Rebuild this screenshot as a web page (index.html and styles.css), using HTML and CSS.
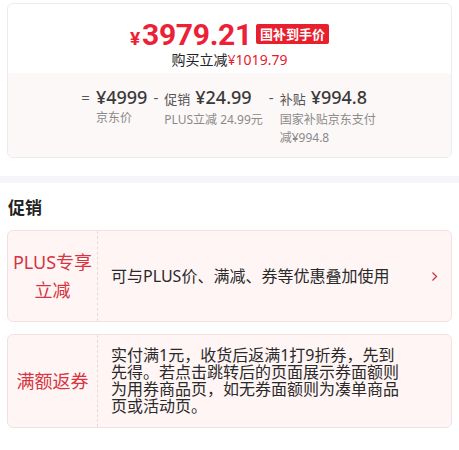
FILE: index.html
```html
<!DOCTYPE html>
<html lang="zh-CN">
<head>
    <meta charset="UTF-8">
    <meta name="viewport" content="width=device-width, initial-scale=1.0">
    <title>价格与促销</title>
    <link rel="stylesheet" href="styles.css">
</head>
<body>
    <div class="price-card">
        <div class="price-main">
            <div class="price-line">
                <span class="final"><span class="yen">¥</span>3979.21</span>
                <span class="badge">国补到手价</span>
            </div>
            <div class="saving">购买立减<span class="red">¥1019.79</span></div>
        </div>
        <div class="price-detail">
            <div class="calc-item">
                <span class="sign">=</span>
                <div class="calc-body">
                    <div class="calc-top"><span class="amount">¥4999</span></div>
                    <div class="calc-sub">京东价</div>
                </div>
            </div>
            <div class="calc-item">
                <span class="sign">-</span>
                <div class="calc-body">
                    <div class="calc-top"><span class="calc-name">促销</span><span class="amount">¥24.99</span></div>
                    <div class="calc-sub">PLUS立减 24.99元</div>
                </div>
            </div>
            <div class="calc-item">
                <span class="sign">-</span>
                <div class="calc-body narrow">
                    <div class="calc-top"><span class="calc-name">补贴</span><span class="amount">¥994.8</span></div>
                    <div class="calc-sub">国家补贴京东支付减¥994.8</div>
                </div>
            </div>
        </div>
    </div>

    <div class="divider-band"></div>

    <h2 class="section-title">促销</h2>

    <div class="promo">
        <div class="promo-label">PLUS专享<br>立减</div>
        <div class="promo-text">可与PLUS价、满减、券等优惠叠加使用</div>
        <div class="promo-arrow">
            <svg width="7" height="11" viewBox="0 0 7 11"><path d="M1.5 1.5 L5.5 5.5 L1.5 9.5" fill="none" stroke="#c8334a" stroke-width="1.3"/></svg>
        </div>
    </div>

    <div class="promo">
        <div class="promo-label">满额返券</div>
        <div class="promo-text">实付满1元，收货后返满1打9折券，先到先得。若点击跳转后的页面展示券面额则为用券商品页，如无券面额则为凑单商品页或活动页。</div>
        <div class="promo-arrow"></div>
    </div>
</body>
</html>
```

FILE: styles.css
```css
body {
    margin: 0;
    padding-top: 3px;
    font-family: "Noto Sans", "Noto Sans CJK SC", sans-serif;
    color: #333;
    background-color: #fff;
}
.price-card {
    margin: 0 7px;
    border: 1px solid #ececec;
    border-radius: 6px;
    overflow: hidden;
}
.price-main {
    height: 69px;
    padding-top: 13px;
    box-sizing: border-box;
    text-align: center;
}
.price-line {
    display: flex;
    justify-content: center;
    align-items: center;
    height: 34px;
}
.final {
    color: #ec2135;
    font-family: Roboto, sans-serif;
    font-weight: 700;
    font-size: 30px;
    letter-spacing: -0.3px;
}
.yen {
    font-size: 19px;
    margin-right: 2px;
}
.badge {
    margin-left: 4px;
    padding: 0 4px;
    height: 20px;
    line-height: 20px;
    background-color: #e8202e;
    color: #fff;
    font-size: 13px;
    font-weight: 700;
    border-radius: 2px;
}
.saving {
    font-size: 14px;
    line-height: 18px;
    color: #222;
}
.saving .red {
    color: #e8202e;
}
.price-detail {
    display: flex;
    justify-content: center;
    gap: 6px;
    padding: 12px 0 10px;
    background-color: #fdf8f8;
}
.calc-item {
    display: flex;
}
.sign {
    padding-right: 6px;
    font-size: 15px;
    line-height: 24px;
    color: #555;
}
.calc-top {
    display: flex;
    align-items: baseline;
    line-height: 24px;
}
.amount {
    font-size: 18px;
    font-weight: 500;
    color: #3a3a3a;
}
.calc-name {
    font-size: 13px;
    color: #555;
    margin-right: 5px;
}
.calc-sub {
    font-size: 12px;
    line-height: 18px;
    color: #8a8a8a;
}
.narrow {
    width: 98px;
}
.divider-band {
    height: 7px;
    margin-top: 18px;
    background-color: #f6f6fa;
}
.section-title {
    margin: 13px 0 10px 8px;
    font-size: 17px;
    line-height: 24px;
    font-weight: 700;
    color: #222;
}
.promo {
    display: flex;
    min-height: 92px;
    margin: 0 7px 12px;
    border: 1px solid #f1e2e2;
    border-radius: 6px;
    background-color: #fff5f5;
    box-sizing: border-box;
}
.promo-label {
    width: 89px;
    flex-shrink: 0;
    display: flex;
    align-items: center;
    justify-content: center;
    text-align: center;
    border-right: 1px dashed #ecd8d8;
    font-size: 18px;
    line-height: 28px;
    color: #d63440;
}
.promo-text {
    flex: 1;
    display: flex;
    align-items: center;
    padding: 12px 14px 12px 13px;
    font-size: 16px;
    line-height: 17px;
    color: #2a2a2a;
}
.promo-arrow {
    width: 34px;
    flex-shrink: 0;
    display: flex;
    align-items: center;
    justify-content: center;
}
```
